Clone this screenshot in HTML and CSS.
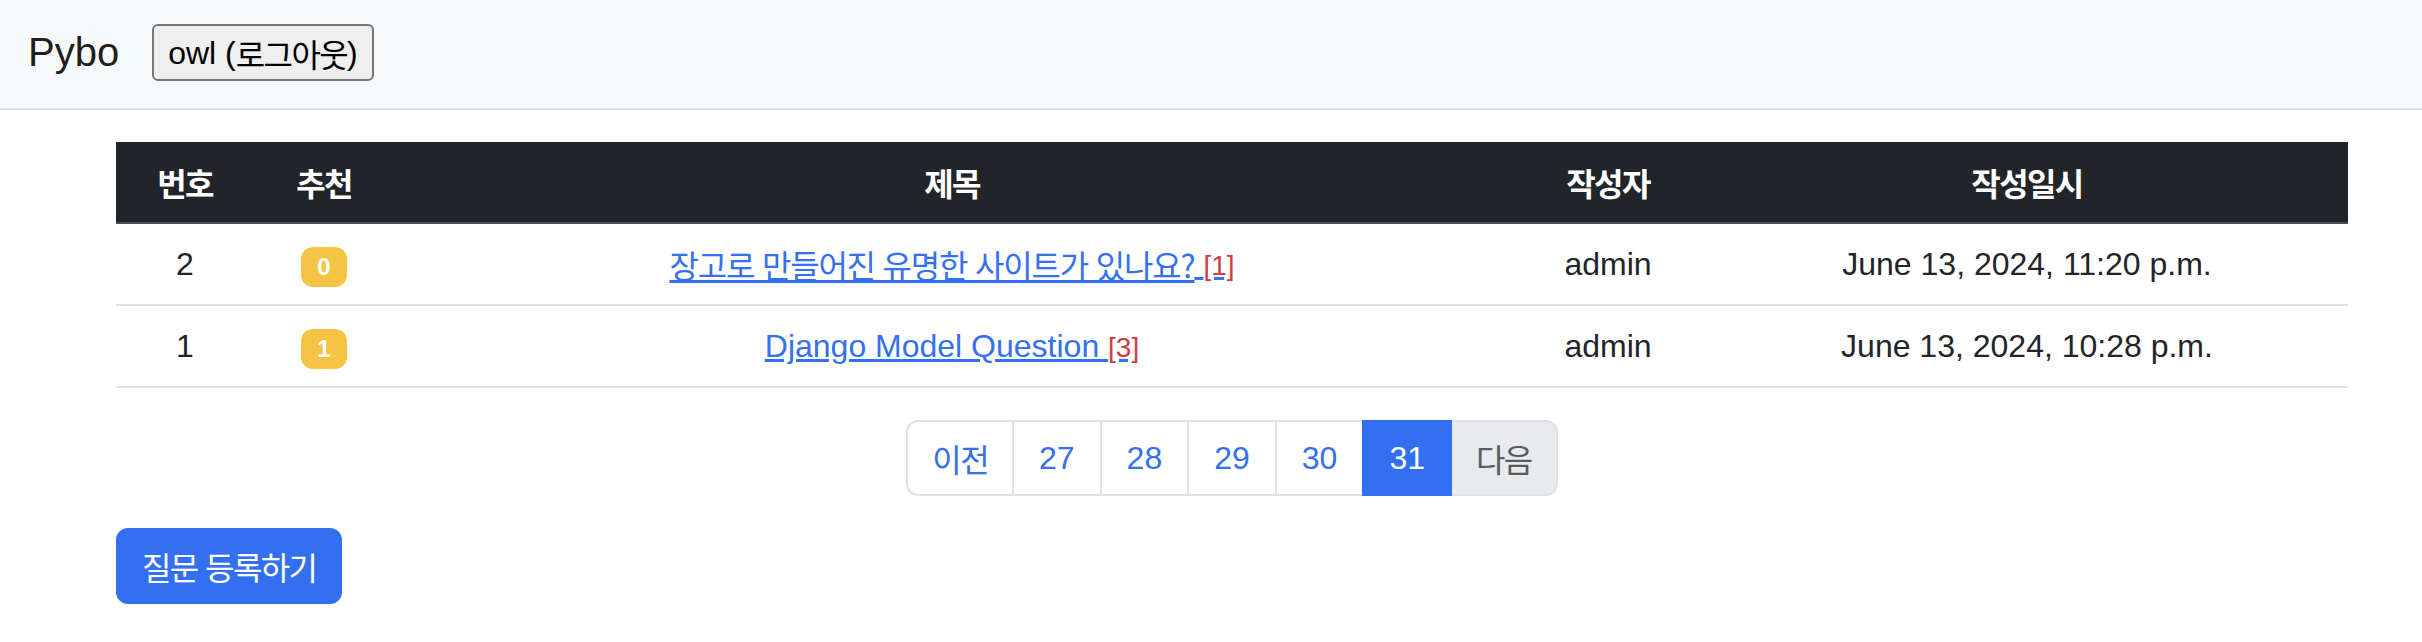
FILE: index.html
```html
<!DOCTYPE html>
<html lang="ko">
<head>
<meta charset="utf-8">
<title>Pybo</title>
<link rel="stylesheet" href="styles.css">
</head>
<body>
<nav class="navbar">
  <a class="brand" href="#">Pybo</a>
  <button class="logout" type="button">owl (<span class="ko">로그아웃</span>)</button>
</nav>
<main class="container">
  <table class="qtable">
    <colgroup>
      <col class="c-num">
      <col class="c-vote">
      <col class="c-title">
      <col class="c-author">
      <col class="c-date">
    </colgroup>
    <thead>
      <tr>
        <th><span class="ko">번호</span></th>
        <th><span class="ko">추천</span></th>
        <th><span class="ko">제목</span></th>
        <th><span class="ko">작성자</span></th>
        <th><span class="ko">작성일시</span></th>
      </tr>
    </thead>
    <tbody>
      <tr>
        <td>2</td>
        <td><span class="badge">0</span></td>
        <td><a class="qlink" href="#"><span class="ko-mix">장고로 만들어진 유명한 사이트가 있나요?</span> <span class="cnt">[1]</span></a></td>
        <td>admin</td>
        <td>June 13, 2024, 11:20 p.m.</td>
      </tr>
      <tr>
        <td>1</td>
        <td><span class="badge">1</span></td>
        <td><a class="qlink" href="#">Django Model Question <span class="cnt">[3]</span></a></td>
        <td>admin</td>
        <td>June 13, 2024, 10:28 p.m.</td>
      </tr>
    </tbody>
  </table>
  <ul class="pagination">
    <li class="page first"><a href="#"><span class="ko">이전</span></a></li>
    <li class="page num"><a href="#">27</a></li>
    <li class="page num"><a href="#">28</a></li>
    <li class="page num"><a href="#">29</a></li>
    <li class="page num"><a href="#">30</a></li>
    <li class="page num active"><a href="#">31</a></li>
    <li class="page last disabled"><a href="#"><span class="ko">다음</span></a></li>
  </ul>
  <a class="btn-primary" href="#"><span class="ko">질문 등록하기</span></a>
</main>
</body>
</html>
```

FILE: styles.css
```css
html, body {
  margin: 0;
  padding: 0;
}

body {
  font-family: "Liberation Sans", "Noto Sans CJK KR", sans-serif;
  font-size: 32px;
  line-height: 48px;
  color: #212529;
  background: #ffffff;
}

.ko,
.ko-mix {
  display: inline-block;
  font-family: "Noto Sans CJK KR", "Liberation Sans", sans-serif;
  line-height: 48px;
  height: 48px;
  vertical-align: top;
  letter-spacing: -1.6px;
}

.ko-mix {
  letter-spacing: -1.2px;
}

/* navbar */
.navbar {
  display: flex;
  align-items: center;
  height: 104px;
  padding: 0 28px 4px 28px;
  background: #f8f9fa;
  border-bottom: 2px solid #dee2e6;
}

.brand {
  font-size: 40px;
  line-height: 60px;
  color: rgba(0, 0, 0, 0.9);
  text-decoration: none;
  margin-right: 33px;
}

.logout {
  font-family: inherit;
  font-size: 32px;
  line-height: 48px;
  padding: 3px 14px 2px 14px;
  border: 2px solid #767676;
  border-radius: 6px;
  background: #efefef;
  color: #000;
}

/* main */
.container {
  width: 2232px;
  margin: 32px 0 0 116px;
}

.qtable {
  width: 2232px;
  table-layout: fixed;
  border-collapse: collapse;
  margin-bottom: 32px;
}

.c-num { width: 138px; }
.c-vote { width: 140px; }
.c-title { width: 1116px; }
.c-author { width: 196px; }
.c-date { width: 642px; }

.qtable th {
  height: 48px;
  background: #212529;
  color: #ffffff;
  font-weight: 700;
  padding: 16px;
  text-align: center;
  border-bottom: 2px solid #4d5154;
}

.qtable td {
  height: 48px;
  padding: 16px;
  text-align: center;
  vertical-align: middle;
  border-bottom: 2px solid #dee2e6;
  color: #212529;
}

.badge {
  display: inline-block;
  padding: 8px 16px;
  font-size: 24px;
  font-weight: 700;
  line-height: 24px;
  color: #ffffff;
  background: #f6c445;
  border-radius: 12px;
}

.qlink {
  color: #3470f0;
  text-decoration: underline;
}

.qlink .ko-mix {
  text-decoration: underline;
}

.cnt {
  color: #cd3c48;
  font-size: 28px;
  line-height: 28px;
}

/* pagination */
.pagination {
  display: flex;
  justify-content: center;
  list-style: none;
  padding: 0;
  margin: 0 0 32px 0;
}

.page a {
  display: block;
  height: 48px;
  padding: 12px 24px;
  border: 2px solid #dee2e6;
  margin-left: -2px;
  background: #ffffff;
  color: #3470f0;
  text-decoration: none;
  line-height: 48px;
}

.page.num a {
  padding: 12px 25px;
}

.page.first a {
  margin-left: 0;
  border-radius: 12px 0 0 12px;
}

.page.last a {
  border-radius: 0 12px 12px 0;
}

.page.active a {
  position: relative;
  background: #3370f1;
  border-color: #3370f1;
  color: #ffffff;
}

.page.disabled a {
  background: #e9eaee;
  color: #595c5f;
}

/* button */
.btn-primary {
  display: inline-block;
  height: 48px;
  padding: 12px 24px;
  border: 2px solid #3370f1;
  border-radius: 12px;
  background: #3370f1;
  color: #ffffff;
  text-decoration: none;
  line-height: 48px;
}
```
